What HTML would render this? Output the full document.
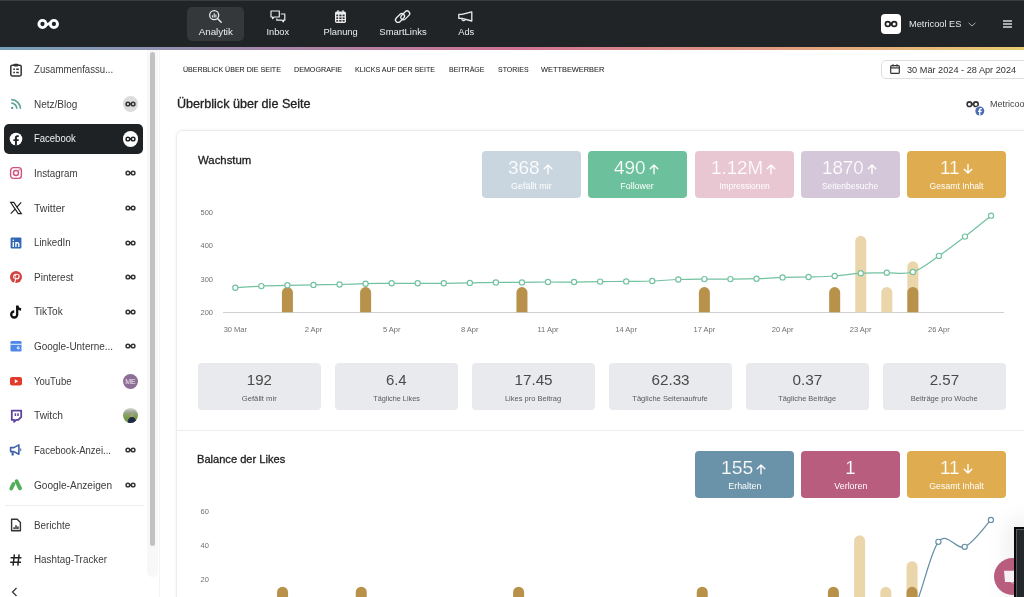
<!DOCTYPE html>
<html><head><meta charset="utf-8"><style>
*{box-sizing:border-box;margin:0;padding:0}
html,body{width:1024px;height:597px;overflow:hidden;background:#fff;font-family:"Liberation Sans",sans-serif;color:#333}
.a{position:absolute;white-space:nowrap}
.f{display:inline-block;white-space:nowrap}
svg{position:absolute;overflow:visible}
.ax{font-family:"Liberation Sans",sans-serif;font-size:7.5px;fill:#707070}
</style></head><body><div id="root" style="position:absolute;left:0;top:0;width:1024px;height:597px;will-change:transform">
<div class="a" style="left:0;top:0;width:1024px;height:47px;background:#212426"></div>
<div class="a" style="left:0;top:0;width:1024px;height:1px;background:#393c3f"></div>
<div class="a" style="left:0;top:47px;width:1024px;height:3px;background:linear-gradient(90deg,#749fb9 0%,#a688ab 25.6%,#cf7293 50%,#e09880 74.4%,#e9cc73 100%)"></div>
<svg style="left:36px;top:18px" width="24" height="12" viewBox="0 0 24 12"><circle cx="6.5" cy="6" r="3.6" fill="none" stroke="#fff" stroke-width="2.9"></circle><circle cx="17.9" cy="6" r="3.6" fill="none" stroke="#fff" stroke-width="2.9"></circle><path d="M9.2 7.6 L15.2 4.4" stroke="#fff" stroke-width="2.6"></path></svg>
<div class="a" style="left:187px;top:7px;width:57px;height:34px;background:#35383b;border-radius:5px"></div>
<svg style="left:208px;top:9px" width="15" height="15" viewBox="0 0 15 15"><circle cx="6.2" cy="6.2" r="4.5" fill="none" stroke="#ececec" stroke-width="1.3"></circle><path d="M9.5 9.5 L13.2 13.3" stroke="#ececec" stroke-width="1.4" stroke-linecap="round"></path><path d="M4.5 8.4V6.3M6.2 8.4V4.2M7.9 8.4V5.4" stroke="#ececec" stroke-width="1.1"></path></svg>
<svg style="left:270px;top:10px" width="16" height="13" viewBox="0 0 16 13"><path d="M1 1h8.3v6H4.2L2.6 8.6V7H1z" fill="none" stroke="#ececec" stroke-width="1.2" stroke-linejoin="round"></path><path d="M10.8 4H14.8v6.2h-1.4v1.6L11.8 10.2H6.8V8.6" fill="none" stroke="#ececec" stroke-width="1.2" stroke-linejoin="round"></path></svg>
<svg style="left:335px;top:10px" width="11" height="13" viewBox="0 0 11 13"><rect x="0" y="1.6" width="11" height="11.3" rx="1.6" fill="#ececec"></rect><path d="M3 0.2v2.6M8 0.2v2.6" stroke="#ececec" stroke-width="1.4"></path><rect x="1.3" y="4.6" width="1.8" height="1.7" fill="#2a2d30"></rect><rect x="1.3" y="7.4" width="1.8" height="1.6" fill="#2a2d30"></rect><rect x="1.3" y="10.0" width="1.8" height="1.6" fill="#2a2d30"></rect><rect x="4.3" y="4.6" width="2.2" height="1.7" fill="#2a2d30"></rect><rect x="4.3" y="7.4" width="2.2" height="1.6" fill="#2a2d30"></rect><rect x="4.3" y="10.0" width="2.2" height="1.6" fill="#2a2d30"></rect><rect x="7.6" y="4.6" width="2.0" height="1.7" fill="#2a2d30"></rect><rect x="7.6" y="7.4" width="2.0" height="1.6" fill="#2a2d30"></rect><rect x="7.6" y="10.0" width="2.0" height="1.6" fill="#2a2d30"></rect></svg>
<svg style="left:394px;top:9px" width="18" height="15" viewBox="0 0 18 15"><g fill="none" stroke="#ececec" stroke-width="1.3"><rect x="0.75" y="6.4" width="10.5" height="5.2" rx="2.6" transform="rotate(-45 6 9)"></rect><rect x="5.95" y="3.8" width="10.5" height="5.2" rx="2.6" transform="rotate(-45 11.2 6.4)"></rect></g></svg>
<svg style="left:458px;top:11px" width="15" height="11" viewBox="0 0 15 11"><path d="M0.8 3.4h3.2L13.8 0.8v9.2L4 7.4H0.8z" fill="none" stroke="#ececec" stroke-width="1.3" stroke-linejoin="round"></path><path d="M3.8 7.6 a1.9 1.9 0 0 0 3.6 1" fill="none" stroke="#ececec" stroke-width="1.2"></path></svg>
<div class="a" style="left:65.90px;width:300px;text-align:center;top:25.67px;font-size:9.6px;line-height:12px;color:#ececec;"><span class="f" style="transform: scaleX(1.021);">Analytik</span></div>
<div class="a" style="left:128.00px;width:300px;text-align:center;top:25.67px;font-size:9.6px;line-height:12px;color:#ececec;"><span class="f" style="transform: scaleX(0.9666);">Inbox</span></div>
<div class="a" style="left:190.90px;width:300px;text-align:center;top:25.67px;font-size:9.6px;line-height:12px;color:#ececec;"><span class="f" style="transform: scaleX(0.9711);">Planung</span></div>
<div class="a" style="left:253.40px;width:300px;text-align:center;top:25.67px;font-size:9.6px;line-height:12px;color:#ececec;"><span class="f" style="transform: scaleX(0.9857);">SmartLinks</span></div>
<div class="a" style="left:315.80px;width:300px;text-align:center;top:25.67px;font-size:9.6px;line-height:12px;color:#ececec;"><span class="f" style="transform: scaleX(0.9669);">Ads</span></div>
<div class="a" style="left:881px;top:14px;width:20px;height:20px;background:#fff;border-radius:4px"></div>
<svg style="left:884px;top:20px" width="14" height="8" viewBox="0 0 14 8"><circle cx="3.8" cy="4" r="2.4" fill="none" stroke="#222" stroke-width="1.7"></circle><circle cx="10.2" cy="4" r="2.4" fill="none" stroke="#222" stroke-width="1.7"></circle><path d="M5.6 5 L8.4 3" stroke="#222" stroke-width="1.6"></path></svg>
<div class="a" style="left:908.90px;top:17.87px;font-size:9.6px;line-height:12px;color:#e6e6e6;"><span class="f" style="transform-origin: 0px 50%; transform: scaleX(0.9634);">Metricool ES</span></div>
<svg style="left:968px;top:22px" width="8" height="5" viewBox="0 0 8 5"><path d="M0.6 0.8 L4 4 L7.4 0.8" fill="none" stroke="#aaa" stroke-width="1"></path></svg>
<svg style="left:1002.5px;top:20px" width="9" height="8" viewBox="0 0 9 8"><path d="M0 1h9M0 4h9M0 7h9" stroke="#d8d8d8" stroke-width="1.5"></path></svg>
<div class="a" style="left:147px;top:50px;width:11px;height:527px;background:#f8f8f8;border-radius:0 0 5px 5px"></div>
<div class="a" style="left:150px;top:52px;width:5px;height:494px;background:#c1c1c1;border-radius:3px"></div>
<svg style="left:9px;top:62.50px" width="14" height="14" viewBox="0 0 14 14"><rect x="1.8" y="2.2" width="10.4" height="10.8" rx="1.4" fill="none" stroke="#333" stroke-width="1.5"></rect><rect x="4.6" y="0.8" width="4.8" height="2.6" rx="0.8" fill="#333"></rect><path d="M4.3 6.3h1.6M4.3 9.6h1.6M7.2 6.3h2.6M7.2 9.6h2.6" stroke="#333" stroke-width="1.5"></path></svg>
<div class="a" style="left:33.60px;top:63.13px;font-size:10px;line-height:13px;color:#3b3b3b;"><span class="f" style="transform-origin: 0px 50%; transform: scaleX(0.9627);">Zusammenfassu...</span></div>
<svg style="left:9px;top:97.12px" width="14" height="14" viewBox="0 0 14 14"><path d="M2.3 6.2a5.6 5.6 0 0 1 5.6 5.6M2.3 2.6a9.2 9.2 0 0 1 9.2 9.2" fill="none" stroke="#5aa397" stroke-width="1.7"></path><circle cx="3.2" cy="10.9" r="1.2" fill="#5aa397"></circle></svg>
<div class="a" style="left:33.60px;top:97.75px;font-size:10px;line-height:13px;color:#3b3b3b;"><span class="f" style="transform-origin: 0px 50%; transform: scaleX(0.9986);">Netz/Blog</span></div>
<div class="a" style="left:122.70px;top:96.32px;width:15.6px;height:15.6px;border-radius:50%;background:#dcdcdc"></div>
<svg style="left:125.00px;top:101.12px" width="11" height="6" viewBox="0 0 11 6"><circle cx="2.9" cy="3" r="1.85" fill="none" stroke="#333" stroke-width="1.45"></circle><circle cx="8.1" cy="3" r="1.85" fill="none" stroke="#333" stroke-width="1.45"></circle><path d="M4.3 3.8 L6.7 2.2" stroke="#333" stroke-width="1.4"></path></svg>
<div class="a" style="left:4px;top:123.84px;width:139px;height:30.2px;background:#1f2225;border-radius:5px"></div>
<svg style="left:9px;top:131.74px" width="14" height="14" viewBox="0 0 14 14"><circle cx="7" cy="7" r="6.3" fill="#fff"></circle><path d="M7.9 13.3V9.1h1.6l.3-1.8H7.9V6c0-.6.3-1 1-1h.9V3.4c-.3 0-.9-.1-1.5-.1-1.5 0-2.4.9-2.4 2.5v1.5H4.4v1.8H6v4.3z" fill="#1f2225"></path></svg>
<div class="a" style="left:33.60px;top:132.38px;font-size:10px;line-height:13px;color:#f0f0f0;"><span class="f" style="transform-origin: 0px 50%; transform: scaleX(0.9494);">Facebook</span></div>
<div class="a" style="left:122.70px;top:130.94px;width:15.6px;height:15.6px;border-radius:50%;background:#fff"></div>
<svg style="left:125.00px;top:135.74px" width="11" height="6" viewBox="0 0 11 6"><circle cx="2.9" cy="3" r="1.85" fill="none" stroke="#1f2225" stroke-width="1.45"></circle><circle cx="8.1" cy="3" r="1.85" fill="none" stroke="#1f2225" stroke-width="1.45"></circle><path d="M4.3 3.8 L6.7 2.2" stroke="#1f2225" stroke-width="1.4"></path></svg>
<svg style="left:9px;top:166.36px" width="14" height="14" viewBox="0 0 14 14"><rect x="1.6" y="1.6" width="10.8" height="10.8" rx="2.8" fill="none" stroke="#d2527c" stroke-width="1.4"></rect><circle cx="7" cy="7" r="2.5" fill="none" stroke="#d2527c" stroke-width="1.4"></circle><circle cx="10.1" cy="3.9" r="0.7" fill="#d2527c"></circle></svg>
<div class="a" style="left:33.60px;top:166.99px;font-size:10px;line-height:13px;color:#3b3b3b;"><span class="f" style="transform-origin: 0px 50%; transform: scaleX(0.9805);">Instagram</span></div>
<svg style="left:125.00px;top:170.36px" width="11" height="6" viewBox="0 0 11 6"><circle cx="2.9" cy="3" r="1.85" fill="none" stroke="#333" stroke-width="1.45"></circle><circle cx="8.1" cy="3" r="1.85" fill="none" stroke="#333" stroke-width="1.45"></circle><path d="M4.3 3.8 L6.7 2.2" stroke="#333" stroke-width="1.4"></path></svg>
<svg style="left:9px;top:200.98px" width="14" height="14" viewBox="0 0 14 14"><path d="M1.6 1.4h3.2l7.6 11.2H9.2z" fill="none" stroke="#222" stroke-width="1.15"></path><path d="M12.2 1.4L7.7 6.4M6.3 7.8L1.8 12.6" stroke="#222" stroke-width="1.2"></path></svg>
<div class="a" style="left:33.60px;top:201.61px;font-size:10px;line-height:13px;color:#3b3b3b;"><span class="f" style="transform-origin: 0px 50%; transform: scaleX(1.0559);">Twitter</span></div>
<svg style="left:125.00px;top:204.98px" width="11" height="6" viewBox="0 0 11 6"><circle cx="2.9" cy="3" r="1.85" fill="none" stroke="#333" stroke-width="1.45"></circle><circle cx="8.1" cy="3" r="1.85" fill="none" stroke="#333" stroke-width="1.45"></circle><path d="M4.3 3.8 L6.7 2.2" stroke="#333" stroke-width="1.4"></path></svg>
<svg style="left:9px;top:235.60px" width="14" height="14" viewBox="0 0 14 14"><rect x="1.6" y="1.6" width="10.8" height="10.8" rx="1" fill="#3268b3"></rect><path d="M4.3 6.1v4.8M6.9 10.9V6.1M6.9 8.1c0-1.6 2.9-2 2.9 0v2.8" fill="none" stroke="#fff" stroke-width="1.35"></path><circle cx="4.3" cy="4.2" r="0.8" fill="#fff"></circle></svg>
<div class="a" style="left:33.60px;top:236.23px;font-size:10px;line-height:13px;color:#3b3b3b;"><span class="f" style="transform-origin: 0px 50%; transform: scaleX(0.9706);">LinkedIn</span></div>
<svg style="left:125.00px;top:239.60px" width="11" height="6" viewBox="0 0 11 6"><circle cx="2.9" cy="3" r="1.85" fill="none" stroke="#333" stroke-width="1.45"></circle><circle cx="8.1" cy="3" r="1.85" fill="none" stroke="#333" stroke-width="1.45"></circle><path d="M4.3 3.8 L6.7 2.2" stroke="#333" stroke-width="1.4"></path></svg>
<svg style="left:9px;top:270.22px" width="14" height="14" viewBox="0 0 14 14"><circle cx="7" cy="7" r="6" fill="#d4403f"></circle><path d="M6.6 5.6c0-1.8 3.5-2 3.5.5 0 1.8-1 2.8-2.2 2.8-.9 0-1.1-.7-1.1-.7L5.7 12.6" fill="none" stroke="#fff" stroke-width="1.2" stroke-linecap="round"></path><path d="M5.5 8.6c-1.3-.6-1.2-3.6 1.1-4.5" fill="none" stroke="#fff" stroke-width="1.2"></path></svg>
<div class="a" style="left:33.60px;top:270.86px;font-size:10px;line-height:13px;color:#3b3b3b;"><span class="f" style="transform-origin: 0px 50%; transform: scaleX(0.9983);">Pinterest</span></div>
<svg style="left:125.00px;top:274.22px" width="11" height="6" viewBox="0 0 11 6"><circle cx="2.9" cy="3" r="1.85" fill="none" stroke="#333" stroke-width="1.45"></circle><circle cx="8.1" cy="3" r="1.85" fill="none" stroke="#333" stroke-width="1.45"></circle><path d="M4.3 3.8 L6.7 2.2" stroke="#333" stroke-width="1.4"></path></svg>
<svg style="left:9px;top:304.84px" width="14" height="14" viewBox="0 0 14 14"><path d="M8.2 0.6v8.9a3 3 0 1 1 -3 -3" fill="none" stroke="#111" stroke-width="2.3"></path><path d="M8.2 1c.3 2 1.7 3.3 3.9 3.5" fill="none" stroke="#111" stroke-width="2.3"></path></svg>
<div class="a" style="left:33.60px;top:305.48px;font-size:10px;line-height:13px;color:#3b3b3b;"><span class="f" style="transform-origin: 0px 50%; transform: scaleX(1.0059);">TikTok</span></div>
<svg style="left:125.00px;top:308.84px" width="11" height="6" viewBox="0 0 11 6"><circle cx="2.9" cy="3" r="1.85" fill="none" stroke="#333" stroke-width="1.45"></circle><circle cx="8.1" cy="3" r="1.85" fill="none" stroke="#333" stroke-width="1.45"></circle><path d="M4.3 3.8 L6.7 2.2" stroke="#333" stroke-width="1.4"></path></svg>
<svg style="left:9px;top:339.46px" width="14" height="14" viewBox="0 0 14 14"><rect x="1.5" y="2" width="11" height="10.5" rx="1.2" fill="#4d87e8"></rect><path d="M1.5 5.3h11" stroke="#fff" stroke-width="0.9"></path><path d="M8.2 8.9h2.3a1.2 1.2 0 1 1 -0.4 -1" fill="none" stroke="#fff" stroke-width="0.8"></path></svg>
<div class="a" style="left:33.60px;top:340.10px;font-size:10px;line-height:13px;color:#3b3b3b;"><span class="f" style="transform-origin: 0px 50%; transform: scaleX(0.995);">Google-Unterne...</span></div>
<svg style="left:125.00px;top:343.46px" width="11" height="6" viewBox="0 0 11 6"><circle cx="2.9" cy="3" r="1.85" fill="none" stroke="#333" stroke-width="1.45"></circle><circle cx="8.1" cy="3" r="1.85" fill="none" stroke="#333" stroke-width="1.45"></circle><path d="M4.3 3.8 L6.7 2.2" stroke="#333" stroke-width="1.4"></path></svg>
<svg style="left:9px;top:374.08px" width="14" height="14" viewBox="0 0 14 14"><rect x="1" y="3" width="12" height="8.4" rx="2" fill="#e23b2e"></rect><path d="M5.8 5.2v4.1l3.4-2.05z" fill="#fff"></path></svg>
<div class="a" style="left:33.60px;top:374.72px;font-size:10px;line-height:13px;color:#3b3b3b;"><span class="f" style="transform-origin: 0px 50%; transform: scaleX(0.9543);">YouTube</span></div>
<div class="a" style="left:123.00px;top:373.58px;width:15px;height:15px;border-radius:50%;background:#8e6d97;color:#f2ebf4;font-size:7px;line-height:15px;text-align:center">ME</div>
<svg style="left:9px;top:408.70px" width="14" height="14" viewBox="0 0 14 14"><path d="M2.8 1.6h9.4v6.4l-2.9 2.9H7.1l-2 2v-2H2.8z" fill="none" stroke="#5c43a3" stroke-width="1.8" stroke-linejoin="round"></path><path d="M6.4 4.3v2.8M9 4.3v2.8" stroke="#5c43a3" stroke-width="1.5"></path></svg>
<div class="a" style="left:33.60px;top:409.34px;font-size:10px;line-height:13px;color:#3b3b3b;"><span class="f" style="transform-origin: 0px 50%; transform: scaleX(1.0232);">Twitch</span></div>
<svg style="left:123.00px;top:408.20px" width="15" height="15" viewBox="0 0 15 15"><defs><clipPath id="pc"><circle cx="7.5" cy="7.5" r="7.5"></circle></clipPath><linearGradient id="pg" x1="0" y1="0" x2="0" y2="1"><stop offset="0" stop-color="#d5d8d2"></stop><stop offset="0.3" stop-color="#9aa38c"></stop><stop offset="0.5" stop-color="#7fa458"></stop><stop offset="1" stop-color="#6a9044"></stop></linearGradient></defs><g clip-path="url(#pc)"><rect width="15" height="15" fill="url(#pg)"></rect><ellipse cx="9" cy="14" rx="4.2" ry="5" fill="#1e2944"></ellipse><circle cx="8.8" cy="7.3" r="1.6" fill="#b89a80"></circle></g></svg>
<svg style="left:9px;top:443.32px" width="14" height="14" viewBox="0 0 14 14"><path d="M1.6 4.6h3.3l5-2.7v9.4l-5-2.7H1.6z" fill="none" stroke="#3d60a8" stroke-width="1.6" stroke-linejoin="round"></path><path d="M2.6 9.2h2.1v3.3H2.6z" fill="#3d60a8"></path><path d="M11.3 5a2 2 0 0 1 0 3.6z" fill="#3d60a8"></path></svg>
<div class="a" style="left:33.60px;top:443.96px;font-size:10px;line-height:13px;color:#3b3b3b;"><span class="f" style="transform-origin: 0px 50%; transform: scaleX(0.9552);">Facebook-Anzei...</span></div>
<svg style="left:125.00px;top:447.32px" width="11" height="6" viewBox="0 0 11 6"><circle cx="2.9" cy="3" r="1.85" fill="none" stroke="#333" stroke-width="1.45"></circle><circle cx="8.1" cy="3" r="1.85" fill="none" stroke="#333" stroke-width="1.45"></circle><path d="M4.3 3.8 L6.7 2.2" stroke="#333" stroke-width="1.4"></path></svg>
<svg style="left:9px;top:477.94px" width="14" height="14" viewBox="0 0 14 14"><path d="M2.2 10.6L4.5 5.9" stroke="#50ae58" stroke-width="3.7" stroke-linecap="round"></path><path d="M7.6 3.3L11 10.3" stroke="#50ae58" stroke-width="3.9" stroke-linecap="round"></path></svg>
<div class="a" style="left:33.60px;top:478.57px;font-size:10px;line-height:13px;color:#3b3b3b;"><span class="f" style="transform-origin: 0px 50%; transform: scaleX(1.0093);">Google-Anzeigen</span></div>
<svg style="left:125.00px;top:481.94px" width="11" height="6" viewBox="0 0 11 6"><circle cx="2.9" cy="3" r="1.85" fill="none" stroke="#333" stroke-width="1.45"></circle><circle cx="8.1" cy="3" r="1.85" fill="none" stroke="#333" stroke-width="1.45"></circle><path d="M4.3 3.8 L6.7 2.2" stroke="#333" stroke-width="1.4"></path></svg>
<div class="a" style="left:4.5px;top:505px;width:139px;height:1px;background:#eeeeee"></div>
<svg style="left:9px;top:518px" width="14" height="14" viewBox="0 0 14 14"><path d="M2.6 1.2h5.6l3.2 3.2v8.4H2.6z" fill="none" stroke="#333" stroke-width="1.4" stroke-linejoin="round"></path><path d="M5.1 11.3V9.2M7 11.3V7.3M8.9 11.3V8.4" stroke="#333" stroke-width="1.5"></path></svg>
<div class="a" style="left:33.60px;top:518.63px;font-size:10px;line-height:13px;color:#3b3b3b;"><span class="f" style="transform-origin: 0px 50%; transform: scaleX(0.9894);">Berichte</span></div>
<svg style="left:9px;top:552.5px" width="14" height="14" viewBox="0 0 14 14"><path d="M5.4 1.4L4.1 12.6M10.1 1.4L8.8 12.6M1.6 4.8h10.8M1.2 9.2h10.8" stroke="#222" stroke-width="1.45"></path></svg>
<div class="a" style="left:33.60px;top:553.13px;font-size:10px;line-height:13px;color:#3b3b3b;"><span class="f" style="transform-origin: 0px 50%; transform: scaleX(0.985);">Hashtag-Tracker</span></div>
<svg style="left:11px;top:587px" width="7" height="10" viewBox="0 0 7 10"><path d="M5.5 1L1.5 5L5.5 9" fill="none" stroke="#333" stroke-width="1.2"></path></svg>
<div class="a" style="left:182.50px;top:64.73px;font-size:8px;line-height:10px;color:#1a1a1a;-webkit-text-stroke:0.05px #1a1a1a;"><span class="f" style="transform-origin: 0px 50%; transform: scaleX(0.8843);">ÜBERBLICK ÜBER DIE SEITE</span></div>
<div class="a" style="left:293.90px;top:64.73px;font-size:8px;line-height:10px;color:#1a1a1a;-webkit-text-stroke:0.05px #1a1a1a;"><span class="f" style="transform-origin: 0px 50%; transform: scaleX(0.8925);">DEMOGRAFIE</span></div>
<div class="a" style="left:355.40px;top:64.73px;font-size:8px;line-height:10px;color:#1a1a1a;-webkit-text-stroke:0.05px #1a1a1a;"><span class="f" style="transform-origin: 0px 50%; transform: scaleX(0.882);">KLICKS AUF DER SEITE</span></div>
<div class="a" style="left:448.90px;top:64.73px;font-size:8px;line-height:10px;color:#1a1a1a;-webkit-text-stroke:0.05px #1a1a1a;"><span class="f" style="transform-origin: 0px 50%; transform: scaleX(0.8776);">BEITRÄGE</span></div>
<div class="a" style="left:497.80px;top:64.73px;font-size:8px;line-height:10px;color:#1a1a1a;-webkit-text-stroke:0.05px #1a1a1a;"><span class="f" style="transform-origin: 0px 50%; transform: scaleX(0.8747);">STORIES</span></div>
<div class="a" style="left:541.40px;top:64.73px;font-size:8px;line-height:10px;color:#1a1a1a;-webkit-text-stroke:0.05px #1a1a1a;"><span class="f" style="transform-origin: 0px 50%; transform: scaleX(0.9247);">WETTBEWERBER</span></div>
<div class="a" style="left:177.40px;top:96.84px;font-size:12px;line-height:15px;color:#222;-webkit-text-stroke:0.3px #222;"><span class="f" style="transform-origin: 0px 50%; transform: scaleX(1.0486);">Überblick über die Seite</span></div>
<div class="a" style="left:881px;top:60px;width:160px;height:19px;border:1px solid #dddddd;border-radius:5px"></div>
<svg style="left:890px;top:64px" width="10" height="10" viewBox="0 0 10 10"><rect x="0.7" y="1.6" width="8.6" height="7.8" rx="0.9" fill="none" stroke="#333" stroke-width="1.2"></rect><path d="M0.7 3.9h8.6" stroke="#333" stroke-width="1.2"></path><path d="M3 0.2v2.2M7 0.2v2.2" stroke="#333" stroke-width="1.1"></path></svg>
<div class="a" style="left:906.50px;top:63.78px;font-size:9.3px;line-height:12px;color:#333;"><span class="f" style="transform-origin: 0px 50%; transform: scaleX(0.9864);">30 Mär 2024 - 28 Apr 2024</span></div>
<svg style="left:966px;top:100px" width="20" height="17" viewBox="0 0 20 17"><circle cx="3.4" cy="4.2" r="2.3" fill="none" stroke="#333" stroke-width="1.6"></circle><circle cx="9.9" cy="4.2" r="2.3" fill="none" stroke="#333" stroke-width="1.6"></circle><path d="M5.2 5.2 L8.1 3.2" stroke="#333" stroke-width="1.6"></path><circle cx="13.8" cy="11" r="5.2" fill="#fff"></circle><circle cx="13.8" cy="11" r="4.5" fill="#4a6db3"></circle><path d="M14.4 15.6V12h1.2l.2-1.3h-1.4V9.9c0-.4.2-.7.7-.7h.7V8c-.2 0-.6-.1-1-.1-1 0-1.7.6-1.7 1.7v1h-1.1V12h1.1v3.6z" fill="#fff"></path></svg>
<div class="a" style="left:990.00px;top:98.18px;font-size:9px;line-height:12px;color:#444;"><span class="f" style="transform-origin:0 50%">Metricool ES</span></div>
<div class="a" style="left:176px;top:129.5px;width:880px;height:520px;border:1px solid #ededed;border-radius:7px;background:#fff;box-shadow:0 0 2px 1px rgba(0,0,0,0.035)"></div>
<div class="a" style="left:159px;top:50px;width:1px;height:547px;background:#f4f4f4"></div>
<div class="a" style="left:177px;top:430px;width:850px;height:1px;background:#eeeeee"></div>
<div class="a" style="left:198.00px;top:152.69px;font-size:11px;line-height:14px;color:#222;-webkit-text-stroke:0.3px #222;"><span class="f" style="transform-origin: 0px 50%; transform: scaleX(1.034);">Wachstum</span></div>
<div class="a" style="left:482px;top:151px;width:99px;height:47px;border-radius:4px;background:#c9d6df"></div>
<div class="a" style="left:507.90px;top:156.39px;font-size:18.5px;line-height:24px;color:#fff;-webkit-text-stroke:0.2px #c9d6df;"><span class="f" style="transform-origin: 0px 50%; transform: scaleX(1.0235);">368</span></div>
<svg style="left:543.00px;top:164.30px" width="10" height="10" viewBox="0 0 10 10"><path d="M5 9.7 V1 M1.2 4.8 L5 1 L8.8 4.8" fill="none" stroke="#fff" stroke-width="1.35" stroke-linecap="round" stroke-linejoin="round"></path></svg>
<div class="a" style="left:381.50px;width:300px;text-align:center;top:180.95px;font-size:8.5px;line-height:11px;color:#fff;"><span class="f" style="transform: scaleX(1.0559);">Gefällt mir</span></div>
<div class="a" style="left:588px;top:151px;width:99px;height:47px;border-radius:4px;background:#6cc19c"></div>
<div class="a" style="left:614.20px;top:156.39px;font-size:18.5px;line-height:24px;color:#fff;-webkit-text-stroke:0.2px #6cc19c;"><span class="f" style="transform-origin: 0px 50%; transform: scaleX(1.0235);">490</span></div>
<svg style="left:649.40px;top:164.30px" width="10" height="10" viewBox="0 0 10 10"><path d="M5 9.7 V1 M1.2 4.8 L5 1 L8.8 4.8" fill="none" stroke="#fff" stroke-width="1.35" stroke-linecap="round" stroke-linejoin="round"></path></svg>
<div class="a" style="left:487.50px;width:300px;text-align:center;top:180.95px;font-size:8.5px;line-height:11px;color:#fff;"><span class="f" style="transform: scaleX(1.0397);">Follower</span></div>
<div class="a" style="left:695px;top:151px;width:99px;height:47px;border-radius:4px;background:#e9c7d2"></div>
<div class="a" style="left:711.20px;top:156.39px;font-size:18.5px;line-height:24px;color:#fff;-webkit-text-stroke:0.2px #e9c7d2;"><span class="f" style="transform-origin: 0px 50%; transform: scaleX(1.0151);">1.12M</span></div>
<svg style="left:766.00px;top:164.30px" width="10" height="10" viewBox="0 0 10 10"><path d="M5 9.7 V1 M1.2 4.8 L5 1 L8.8 4.8" fill="none" stroke="#fff" stroke-width="1.35" stroke-linecap="round" stroke-linejoin="round"></path></svg>
<div class="a" style="left:594.50px;width:300px;text-align:center;top:180.95px;font-size:8.5px;line-height:11px;color:#fff;"><span class="f" style="transform: scaleX(0.9915);">Impressionen</span></div>
<div class="a" style="left:801px;top:151px;width:99px;height:47px;border-radius:4px;background:#d4c7d9"></div>
<div class="a" style="left:822.10px;top:156.39px;font-size:18.5px;line-height:24px;color:#fff;-webkit-text-stroke:0.2px #d4c7d9;"><span class="f" style="transform-origin: 0px 50%; transform: scaleX(1.0132);">1870</span></div>
<svg style="left:867.00px;top:164.30px" width="10" height="10" viewBox="0 0 10 10"><path d="M5 9.7 V1 M1.2 4.8 L5 1 L8.8 4.8" fill="none" stroke="#fff" stroke-width="1.35" stroke-linecap="round" stroke-linejoin="round"></path></svg>
<div class="a" style="left:700.50px;width:300px;text-align:center;top:180.95px;font-size:8.5px;line-height:11px;color:#fff;"><span class="f" style="transform: scaleX(1.0044);">Seitenbesuche</span></div>
<div class="a" style="left:907px;top:151px;width:99px;height:47px;border-radius:4px;background:#dfac4f"></div>
<div class="a" style="left:939.50px;top:156.39px;font-size:18.5px;line-height:24px;color:#fff;-webkit-text-stroke:0.2px #dfac4f;"><span class="f" style="transform-origin: 0px 50%; transform: scaleX(1.0146);">11</span></div>
<svg style="left:962.80px;top:164.30px" width="10" height="10" viewBox="0 0 10 10"><path d="M5 0.3 V9 M1.2 5.2 L5 9 L8.8 5.2" fill="none" stroke="#fff" stroke-width="1.35" stroke-linecap="round" stroke-linejoin="round"></path></svg>
<div class="a" style="left:806.50px;width:300px;text-align:center;top:180.95px;font-size:8.5px;line-height:11px;color:#fff;"><span class="f" style="transform: scaleX(1.0166);">Gesamt Inhalt</span></div>
<div class="a" style="left:197.70px;top:363.2px;width:123px;height:46.5px;border-radius:4px;background:#e9eaed"></div>
<div class="a" style="left:109.20px;width:300px;text-align:center;top:370.97px;font-size:14.8px;line-height:19px;color:#4a4a4a;"><span class="f" style="transform: scaleX(1.0161);">192</span></div>
<div class="a" style="left:109.20px;width:300px;text-align:center;top:393.73px;font-size:8px;line-height:10px;color:#5a5a5a;"><span class="f" style="transform: scaleX(0.9601);">Gefällt mir</span></div>
<div class="a" style="left:334.80px;top:363.2px;width:123px;height:46.5px;border-radius:4px;background:#e9eaed"></div>
<div class="a" style="left:246.30px;width:300px;text-align:center;top:370.97px;font-size:14.8px;line-height:19px;color:#4a4a4a;"><span class="f" style="transform: scaleX(1.0108);">6.4</span></div>
<div class="a" style="left:246.30px;width:300px;text-align:center;top:393.73px;font-size:8px;line-height:10px;color:#5a5a5a;"><span class="f" style="transform: scaleX(0.9093);">Tägliche Likes</span></div>
<div class="a" style="left:471.90px;top:363.2px;width:123px;height:46.5px;border-radius:4px;background:#e9eaed"></div>
<div class="a" style="left:383.40px;width:300px;text-align:center;top:370.97px;font-size:14.8px;line-height:19px;color:#4a4a4a;"><span class="f" style="transform: scaleX(1.0289);">17.45</span></div>
<div class="a" style="left:383.40px;width:300px;text-align:center;top:393.73px;font-size:8px;line-height:10px;color:#5a5a5a;"><span class="f" style="transform: scaleX(0.9362);">Likes pro Beitrag</span></div>
<div class="a" style="left:609.00px;top:363.2px;width:123px;height:46.5px;border-radius:4px;background:#e9eaed"></div>
<div class="a" style="left:520.50px;width:300px;text-align:center;top:370.97px;font-size:14.8px;line-height:19px;color:#4a4a4a;"><span class="f" style="transform: scaleX(1.0289);">62.33</span></div>
<div class="a" style="left:520.50px;width:300px;text-align:center;top:393.73px;font-size:8px;line-height:10px;color:#5a5a5a;"><span class="f" style="transform: scaleX(0.9418);">Tägliche Seitenaufrufe</span></div>
<div class="a" style="left:746.10px;top:363.2px;width:123px;height:46.5px;border-radius:4px;background:#e9eaed"></div>
<div class="a" style="left:657.60px;width:300px;text-align:center;top:370.97px;font-size:14.8px;line-height:19px;color:#4a4a4a;"><span class="f" style="transform: scaleX(1.0343);">0.37</span></div>
<div class="a" style="left:657.60px;width:300px;text-align:center;top:393.73px;font-size:8px;line-height:10px;color:#5a5a5a;"><span class="f" style="transform: scaleX(0.9315);">Tägliche Beiträge</span></div>
<div class="a" style="left:883.20px;top:363.2px;width:123px;height:46.5px;border-radius:4px;background:#e9eaed"></div>
<div class="a" style="left:794.70px;width:300px;text-align:center;top:370.97px;font-size:14.8px;line-height:19px;color:#4a4a4a;"><span class="f" style="transform: scaleX(1.0204);">2.57</span></div>
<div class="a" style="left:794.70px;width:300px;text-align:center;top:393.73px;font-size:8px;line-height:10px;color:#5a5a5a;"><span class="f" style="transform: scaleX(0.9495);">Beiträge pro Woche</span></div>
<div class="a" style="left:197.30px;top:451.99px;font-size:11px;line-height:14px;color:#222;-webkit-text-stroke:0.3px #222;"><span class="f" style="transform-origin: 0px 50%; transform: scaleX(1.0085);">Balance der Likes</span></div>
<div class="a" style="left:695px;top:451px;width:99px;height:47px;border-radius:4px;background:#6a92a8"></div>
<div class="a" style="left:720.90px;top:456.29px;font-size:18.5px;line-height:24px;color:#fff;-webkit-text-stroke:0.2px #6a92a8;"><span class="f" style="transform-origin: 0px 50%; transform: scaleX(1.0462);">155</span></div>
<svg style="left:755.50px;top:464.20px" width="10" height="10" viewBox="0 0 10 10"><path d="M5 9.7 V1 M1.2 4.8 L5 1 L8.8 4.8" fill="none" stroke="#fff" stroke-width="1.35" stroke-linecap="round" stroke-linejoin="round"></path></svg>
<div class="a" style="left:594.50px;width:300px;text-align:center;top:481.15px;font-size:8.5px;line-height:11px;color:#fff;"><span class="f" style="transform: scaleX(1.0482);">Erhalten</span></div>
<div class="a" style="left:801px;top:451px;width:99px;height:47px;border-radius:4px;background:#b85d7e"></div>
<div class="a" style="left:700.50px;width:300px;text-align:center;top:456.29px;font-size:18.5px;line-height:24px;color:#fff;-webkit-text-stroke:0.2px #b85d7e;"><span class="f" style="">1</span></div>
<div class="a" style="left:700.50px;width:300px;text-align:center;top:481.15px;font-size:8.5px;line-height:11px;color:#fff;"><span class="f" style="transform: scaleX(1.0419);">Verloren</span></div>
<div class="a" style="left:907px;top:451px;width:99px;height:47px;border-radius:4px;background:#dfac4f"></div>
<div class="a" style="left:939.50px;top:456.29px;font-size:18.5px;line-height:24px;color:#fff;-webkit-text-stroke:0.2px #dfac4f;"><span class="f" style="transform-origin: 0px 50%; transform: scaleX(1.0146);">11</span></div>
<svg style="left:962.80px;top:464.20px" width="10" height="10" viewBox="0 0 10 10"><path d="M5 0.3 V9 M1.2 5.2 L5 9 L8.8 5.2" fill="none" stroke="#fff" stroke-width="1.35" stroke-linecap="round" stroke-linejoin="round"></path></svg>
<div class="a" style="left:806.50px;width:300px;text-align:center;top:481.15px;font-size:8.5px;line-height:11px;color:#fff;"><span class="f" style="transform: scaleX(1.026);">Gesamt Inhalt</span></div>
<svg style="left:0;top:0" width="1024" height="597" viewBox="0 0 1024 597"><text class="ax" x="200.5" y="214.9">500</text><text class="ax" x="200.5" y="248.4">400</text><text class="ax" x="200.5" y="282.0">300</text><text class="ax" x="200.5" y="315.3">200</text><path d="M223 312.5H1004" stroke="#d0d0d0" stroke-width="1"></path><text class="ax" x="235.3" y="332.2" text-anchor="middle">30 Mar</text><text class="ax" x="313.5" y="332.2" text-anchor="middle">2 Apr</text><text class="ax" x="391.7" y="332.2" text-anchor="middle">5 Apr</text><text class="ax" x="469.8" y="332.2" text-anchor="middle">8 Apr</text><text class="ax" x="548.0" y="332.2" text-anchor="middle">11 Apr</text><text class="ax" x="626.2" y="332.2" text-anchor="middle">14 Apr</text><text class="ax" x="704.4" y="332.2" text-anchor="middle">17 Apr</text><text class="ax" x="782.6" y="332.2" text-anchor="middle">20 Apr</text><text class="ax" x="860.7" y="332.2" text-anchor="middle">23 Apr</text><text class="ax" x="938.9" y="332.2" text-anchor="middle">26 Apr</text><path d="M281.92 312.20V292.60A5.5 5.5 0 0 1 292.92 292.60V312.20z" fill="#b8914a"></path><path d="M360.10 312.20V292.60A5.5 5.5 0 0 1 371.10 292.60V312.20z" fill="#b8914a"></path><path d="M516.46 312.20V292.60A5.5 5.5 0 0 1 527.46 292.60V312.20z" fill="#b8914a"></path><path d="M698.88 312.20V292.60A5.5 5.5 0 0 1 709.88 292.60V312.20z" fill="#b8914a"></path><path d="M829.18 312.20V292.60A5.5 5.5 0 0 1 840.18 292.60V312.20z" fill="#b8914a"></path><path d="M855.24 312.20V241.30A5.5 5.5 0 0 1 866.24 241.30V312.20z" fill="#ead6aa"></path><path d="M881.30 312.20V292.50A5.5 5.5 0 0 1 892.30 292.50V312.20z" fill="#ead6aa"></path><path d="M907.36 312.20V266.80A5.5 5.5 0 0 1 918.36 266.80V312.20z" fill="#ead6aa"></path><path d="M907.36 312.20V292.50A5.5 5.5 0 0 1 918.36 292.50V312.20z" fill="#b8914a"></path><path d="M235.30 287.80 C239.64 287.52 252.67 286.52 261.36 286.10 C270.05 285.68 278.73 285.50 287.42 285.30 C296.11 285.10 304.79 285.03 313.48 284.90 C322.17 284.77 330.85 284.70 339.54 284.50 C348.23 284.30 356.91 283.90 365.60 283.70 C374.29 283.50 382.97 283.37 391.66 283.30 C400.35 283.23 409.03 283.30 417.72 283.30 C426.41 283.30 435.09 283.37 443.78 283.30 C452.47 283.23 461.15 283.05 469.84 282.90 C478.53 282.75 487.21 282.48 495.90 282.40 C504.59 282.32 513.27 282.47 521.96 282.40 C530.65 282.33 539.33 282.07 548.02 282.00 C556.71 281.93 565.39 282.07 574.08 282.00 C582.77 281.93 591.45 281.70 600.14 281.60 C608.83 281.50 617.51 281.50 626.20 281.40 C634.89 281.30 643.57 281.32 652.26 281.00 C660.95 280.68 669.63 279.82 678.32 279.50 C687.01 279.18 695.69 279.17 704.38 279.10 C713.07 279.03 721.75 279.17 730.44 279.10 C739.13 279.03 747.81 278.98 756.50 278.70 C765.19 278.42 773.87 277.68 782.56 277.40 C791.25 277.12 799.93 277.23 808.62 277.00 C817.31 276.77 825.99 276.63 834.68 276.00 C843.37 275.37 852.05 273.73 860.74 273.20 C869.43 272.67 878.11 273.00 886.80 272.80 C895.49 272.60 904.17 274.82 912.86 272.00 C921.55 269.18 930.23 261.80 938.92 255.90 C947.61 250.00 956.29 243.30 964.98 236.60 C973.67 229.90 986.70 219.18 991.04 215.70" fill="none" stroke="#72c2a1" stroke-width="1.25"></path><circle cx="235.30" cy="287.80" r="2.6" fill="#fff" stroke="#72c2a1" stroke-width="1.15"></circle><circle cx="261.36" cy="286.10" r="2.6" fill="#fff" stroke="#72c2a1" stroke-width="1.15"></circle><circle cx="287.42" cy="285.30" r="2.6" fill="#fff" stroke="#72c2a1" stroke-width="1.15"></circle><circle cx="313.48" cy="284.90" r="2.6" fill="#fff" stroke="#72c2a1" stroke-width="1.15"></circle><circle cx="339.54" cy="284.50" r="2.6" fill="#fff" stroke="#72c2a1" stroke-width="1.15"></circle><circle cx="365.60" cy="283.70" r="2.6" fill="#fff" stroke="#72c2a1" stroke-width="1.15"></circle><circle cx="391.66" cy="283.30" r="2.6" fill="#fff" stroke="#72c2a1" stroke-width="1.15"></circle><circle cx="417.72" cy="283.30" r="2.6" fill="#fff" stroke="#72c2a1" stroke-width="1.15"></circle><circle cx="443.78" cy="283.30" r="2.6" fill="#fff" stroke="#72c2a1" stroke-width="1.15"></circle><circle cx="469.84" cy="282.90" r="2.6" fill="#fff" stroke="#72c2a1" stroke-width="1.15"></circle><circle cx="495.90" cy="282.40" r="2.6" fill="#fff" stroke="#72c2a1" stroke-width="1.15"></circle><circle cx="521.96" cy="282.40" r="2.6" fill="#fff" stroke="#72c2a1" stroke-width="1.15"></circle><circle cx="548.02" cy="282.00" r="2.6" fill="#fff" stroke="#72c2a1" stroke-width="1.15"></circle><circle cx="574.08" cy="282.00" r="2.6" fill="#fff" stroke="#72c2a1" stroke-width="1.15"></circle><circle cx="600.14" cy="281.60" r="2.6" fill="#fff" stroke="#72c2a1" stroke-width="1.15"></circle><circle cx="626.20" cy="281.40" r="2.6" fill="#fff" stroke="#72c2a1" stroke-width="1.15"></circle><circle cx="652.26" cy="281.00" r="2.6" fill="#fff" stroke="#72c2a1" stroke-width="1.15"></circle><circle cx="678.32" cy="279.50" r="2.6" fill="#fff" stroke="#72c2a1" stroke-width="1.15"></circle><circle cx="704.38" cy="279.10" r="2.6" fill="#fff" stroke="#72c2a1" stroke-width="1.15"></circle><circle cx="730.44" cy="279.10" r="2.6" fill="#fff" stroke="#72c2a1" stroke-width="1.15"></circle><circle cx="756.50" cy="278.70" r="2.6" fill="#fff" stroke="#72c2a1" stroke-width="1.15"></circle><circle cx="782.56" cy="277.40" r="2.6" fill="#fff" stroke="#72c2a1" stroke-width="1.15"></circle><circle cx="808.62" cy="277.00" r="2.6" fill="#fff" stroke="#72c2a1" stroke-width="1.15"></circle><circle cx="834.68" cy="276.00" r="2.6" fill="#fff" stroke="#72c2a1" stroke-width="1.15"></circle><circle cx="860.74" cy="273.20" r="2.6" fill="#fff" stroke="#72c2a1" stroke-width="1.15"></circle><circle cx="886.80" cy="272.80" r="2.6" fill="#fff" stroke="#72c2a1" stroke-width="1.15"></circle><circle cx="912.86" cy="272.00" r="2.6" fill="#fff" stroke="#72c2a1" stroke-width="1.15"></circle><circle cx="938.92" cy="255.90" r="2.6" fill="#fff" stroke="#72c2a1" stroke-width="1.15"></circle><circle cx="964.98" cy="236.60" r="2.6" fill="#fff" stroke="#72c2a1" stroke-width="1.15"></circle><circle cx="991.04" cy="215.70" r="2.6" fill="#fff" stroke="#72c2a1" stroke-width="1.15"></circle><text class="ax" x="200.5" y="514.3">60</text><text class="ax" x="200.5" y="547.8">40</text><text class="ax" x="200.5" y="581.5">20</text><path d="M277.06 620.00V592.20A5.5 5.5 0 0 1 288.06 592.20V620.00z" fill="#b8914a"></path><path d="M355.75 620.00V592.20A5.5 5.5 0 0 1 366.75 592.20V620.00z" fill="#b8914a"></path><path d="M513.13 620.00V592.20A5.5 5.5 0 0 1 524.13 592.20V620.00z" fill="#b8914a"></path><path d="M696.74 620.00V592.20A5.5 5.5 0 0 1 707.74 592.20V620.00z" fill="#b8914a"></path><path d="M827.89 620.00V592.20A5.5 5.5 0 0 1 838.89 592.20V620.00z" fill="#b8914a"></path><path d="M854.12 620.00V540.80A5.5 5.5 0 0 1 865.12 540.80V620.00z" fill="#ead6aa"></path><path d="M880.35 620.00V592.30A5.5 5.5 0 0 1 891.35 592.30V620.00z" fill="#ead6aa"></path><path d="M906.58 620.00V566.70A5.5 5.5 0 0 1 917.58 566.70V620.00z" fill="#ead6aa"></path><path d="M906.58 620.00V592.30A5.5 5.5 0 0 1 917.58 592.30V620.00z" fill="#b8914a"></path><path d="M754.70 612.00 C759.07 612.00 772.19 612.00 780.93 612.00 C789.67 612.00 798.42 612.00 807.16 612.00 C815.90 612.00 824.65 612.00 833.39 612.00 C842.13 612.00 850.88 612.00 859.62 612.00 C868.36 612.00 877.11 612.00 885.85 612.00 C894.59 612.00 903.32 623.70 912.08 612.00 C920.84 600.30 929.63 552.67 938.40 541.80 C947.17 530.93 955.95 550.45 964.70 546.80 C973.45 543.15 986.53 524.38 990.90 519.90" fill="none" stroke="#658fa6" stroke-width="1.25"></path><circle cx="938.40" cy="541.80" r="2.6" fill="#fff" stroke="#658fa6" stroke-width="1.15"></circle><circle cx="964.70" cy="546.80" r="2.6" fill="#fff" stroke="#658fa6" stroke-width="1.15"></circle><circle cx="990.90" cy="519.90" r="2.6" fill="#fff" stroke="#658fa6" stroke-width="1.15"></circle></svg>
<div class="a" style="left:1014px;top:527px;width:20px;height:80px;box-shadow:0 0 22px 6px rgba(0,0,0,0.08)"></div>
<div class="a" style="left:994px;top:558px;width:37px;height:37px;border-radius:50%;background:#b85d7e"></div>
<svg style="left:1003px;top:569px" width="14" height="16" viewBox="0 0 14 16"><path d="M1 1.8h12v11.2H9L11.5 15.6L7.6 13H2z" fill="#f6f0f2"></path></svg>
<div class="a" style="left:1014px;top:527px;width:20px;height:80px;background:#23272b;border:2px solid #080808;box-shadow:inset 1px 1px 0 #5a5a5a"></div>
</div></body></html>
